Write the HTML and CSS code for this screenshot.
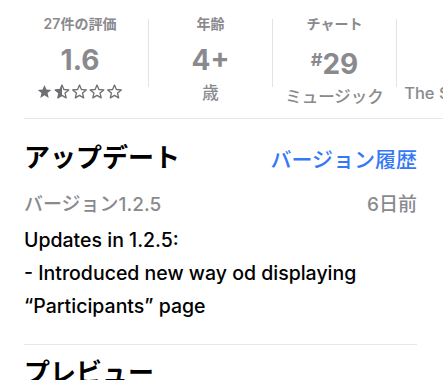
FILE: index.html
```html
<!DOCTYPE html>
<html lang="ja">
<head>
    <meta charset="UTF-8">
    <meta name="viewport" content="width=device-width, initial-scale=1.0">
    <title>App Info</title>
    <link rel="stylesheet" href="styles.css">
</head>
<body>
    <!-- 評価・年齢・チャートなどの情報 -->
    <div class="stats">
        <div class="stat first">
            <div class="stat-label">27件の評価</div>
            <div class="stat-value">1.6</div>
            <svg class="stars" width="86" height="15" viewBox="0 0 86 15">
                <defs>
                    <path id="star" d="M7.5 1l1.9 4.5 4.9.4-3.75 3.2 1.15 4.8L7.5 11.35 3.3 13.9l1.15-4.8L.7 5.9l4.9-.4z"/>
                    <clipPath id="half"><rect x="0" y="0" width="7.5" height="15"/></clipPath>
                </defs>
                <use href="#star" class="star-full"/>
                <g transform="translate(17.5 0)">
                    <use href="#star" class="star-empty"/>
                    <use href="#star" class="star-full" clip-path="url(#half)"/>
                </g>
                <use href="#star" class="star-empty" transform="translate(35 0)"/>
                <use href="#star" class="star-empty" transform="translate(52.5 0)"/>
                <use href="#star" class="star-empty" transform="translate(70 0)"/>
            </svg>
        </div>
        <div class="divider"></div>
        <div class="stat">
            <div class="stat-label">年齢</div>
            <div class="stat-value">4+</div>
            <div class="stat-sub">歳</div>
        </div>
        <div class="divider"></div>
        <div class="stat">
            <div class="stat-label">チャート</div>
            <div class="stat-value"><span class="hash">#</span>29</div>
            <div class="stat-sub">ミュージック</div>
        </div>
        <div class="divider"></div>
        <div class="stat wide">
            <div class="stat-label">デベロッパー</div>
            <div class="stat-value">&nbsp;</div>
            <div class="stat-sub">The Studio Labs, Inc.</div>
        </div>
    </div>

    <!-- アップデート -->
    <div class="section">
        <div class="section-head">
            <h2>アップデート</h2>
            <a class="link" href="#">バージョン履歴</a>
        </div>
        <div class="version-row">
            <span>バージョン1.2.5</span>
            <span>6日前</span>
        </div>
        <p class="notes">Updates in 1.2.5:<br>- Introduced new way od displaying<br>“Participants” page</p>
    </div>

    <!-- プレビュー -->
    <div class="section preview">
        <h2>プレビュー</h2>
    </div>
</body>
</html>
```

FILE: styles.css
```css
body {
    font-family: Inter, "Noto Sans CJK JP", sans-serif;
    background-color: #ffffff;
    color: #000000;
    margin: 0;
    overflow: hidden;
}
.stats {
    display: flex;
    align-items: flex-start;
    margin-left: 24px;
    height: 118px;
    border-bottom: 1px solid #e6e6e8;
    overflow: hidden;
}
.stat {
    flex: none;
    width: 123px;
    display: flex;
    flex-direction: column;
    align-items: center;
    padding-top: 19px;
    color: #8a8a8e;
}
.stat.first {
    width: 112px;
    padding-right: 12px;
}
.stat.wide {
    width: 180px;
}
.divider {
    flex: none;
    width: 1px;
    height: 68px;
    margin-top: 19px;
    background-color: #e3e3e5;
}
.stat-label {
    font-size: 14px;
    font-weight: 600;
    line-height: 10px;
    white-space: nowrap;
}
.stat-value {
    margin-top: 15px;
    font-size: 28px;
    font-weight: 700;
    line-height: 32px;
}
.hash {
    font-size: 18px;
    vertical-align: 8px;
}
.stat-sub {
    margin-top: 8px;
    font-size: 16.5px;
    font-weight: 500;
    line-height: 18px;
    white-space: nowrap;
}
.stars {
    margin-top: 8px;
}
.star-full {
    fill: #6e6e73;
}
.star-empty {
    fill: none;
    stroke: #6e6e73;
    stroke-width: 1.3;
    stroke-linejoin: round;
}
.section {
    margin: 0 26px 0 24px;
}
.section h2 {
    margin: 0;
    font-size: 26px;
    font-weight: 700;
    line-height: 30px;
}
.section-head {
    display: flex;
    justify-content: space-between;
    align-items: center;
    margin-top: 24px;
}
.link {
    color: #3478f6;
    font-size: 21px;
    font-weight: 500;
    text-decoration: none;
}
.version-row {
    display: flex;
    justify-content: space-between;
    margin-top: 20px;
    font-size: 19px;
    font-weight: 500;
    line-height: 24px;
    color: #8a8a8e;
}
.notes {
    margin: 7px 0 0;
    padding-bottom: 21px;
    font-size: 19.5px;
    font-weight: 500;
    line-height: 33px;
    border-bottom: 1px solid #e6e6e8;
}
.preview {
    padding-top: 13px;
}
```
